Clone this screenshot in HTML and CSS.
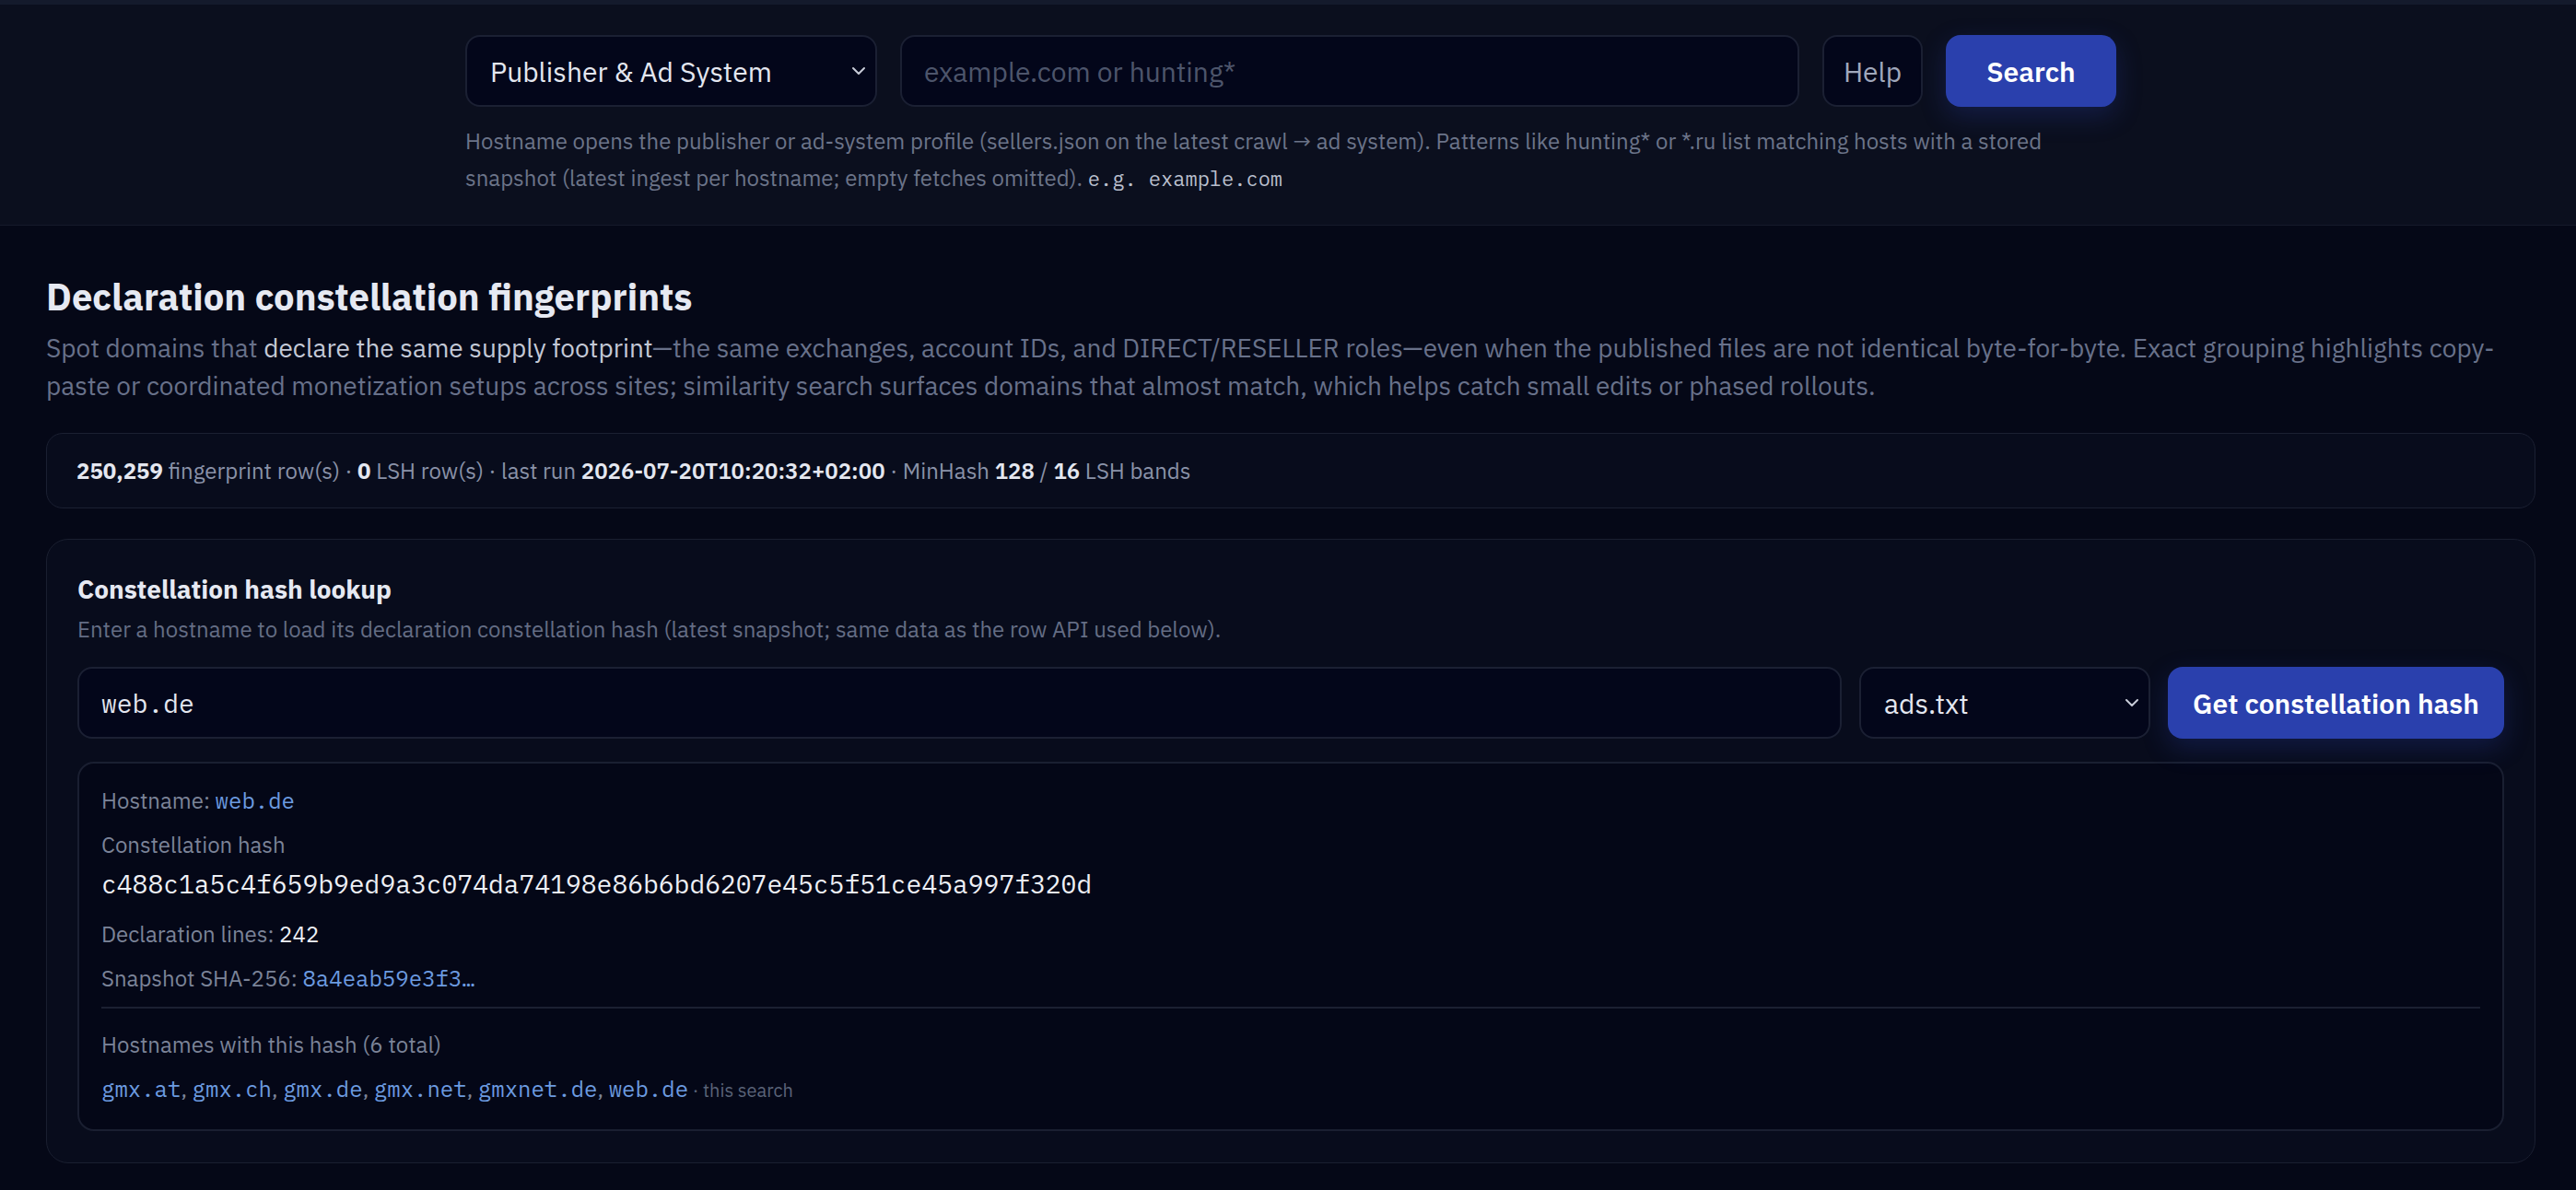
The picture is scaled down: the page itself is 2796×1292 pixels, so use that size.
FILE: index.html
```html
<!DOCTYPE html>
<html lang="en">
<head>
<meta charset="UTF-8">
    <title>Declaration constellation fingerprints</title>
    <link rel="stylesheet" href="styles.css">
</head>
<body>
    <header class="topbar">
        <div class="topbar-inner">
            <form class="search-row">
                <div class="select-wrap mode-select">
                    <select class="field">
                        <option>Publisher &amp; Ad System</option>
                    </select>
                    <svg class="caret" width="16" height="10" viewBox="0 0 16 10"><path d="M2 2l6 6 6-6" fill="none" stroke="currentColor" stroke-width="2" stroke-linecap="round" stroke-linejoin="round"/></svg>
                </div>
                <input class="field query" type="text" placeholder="example.com or hunting*">
                <button type="button" class="btn-ghost">Help</button>
                <button type="button" class="btn-primary">Search</button>
            </form>
            <p class="hint">Hostname opens the publisher or ad-system profile (sellers.json on the latest crawl → ad system). Patterns like hunting* or *.ru list matching hosts with a stored snapshot (latest ingest per hostname; empty fetches omitted). <code>e.g. example.com</code></p>
        </div>
    </header>

    <main class="page">
        <h1 class="page-title">Declaration constellation fingerprints</h1>
        <p class="lead">Spot domains that <strong>declare the same supply footprint</strong>—the same exchanges, account IDs, and DIRECT/RESELLER roles—even when the published files are not identical byte-for-byte. Exact grouping highlights copy-paste or coordinated monetization setups across sites; similarity search surfaces domains that almost match, which helps catch small edits or phased rollouts.</p>

        <div class="stats">
            <b>250,259</b> fingerprint row(s) · <b>0</b> LSH row(s) · last run <b>2026-07-20T10:20:32+02:00</b> · MinHash <b>128</b> / <b>16</b> LSH bands
        </div>

        <section class="card">
            <h2 class="card-title">Constellation hash lookup</h2>
            <p class="card-sub">Enter a hostname to load its declaration constellation hash (latest snapshot; same data as the row API used below).</p>

            <div class="lookup-row">
                <input class="field host" type="text" value="web.de">
                <div class="select-wrap file-select">
                    <select class="field">
                        <option>ads.txt</option>
                    </select>
                    <svg class="caret" width="16" height="10" viewBox="0 0 16 10"><path d="M2 2l6 6 6-6" fill="none" stroke="currentColor" stroke-width="2" stroke-linecap="round" stroke-linejoin="round"/></svg>
                </div>
                <button type="button" class="btn-primary btn-wide">Get constellation hash</button>
            </div>

            <div class="result">
                <div class="r-line"><span class="lbl">Hostname:</span> <a class="mono-link">web.de</a></div>
                <div class="r-line r-label">Constellation hash</div>
                <div class="r-hash">c488c1a5c4f659b9ed9a3c074da74198e86b6bd6207e45c5f51ce45a997f320d</div>
                <div class="r-line r-gap"><span class="lbl">Declaration lines:</span> <span class="val">242</span></div>
                <div class="r-line"><span class="lbl">Snapshot SHA-256:</span> <a class="mono-link">8a4eab59e3f3…</a></div>
                <div class="divider"></div>
                <div class="r-line r-label r-gap2">Hostnames with this hash (6 total)</div>
                <div class="r-line hosts">
                    <a class="mono-link">gmx.at</a><span class="sep">, </span><a class="mono-link">gmx.ch</a><span class="sep">, </span><a class="mono-link">gmx.de</a><span class="sep">, </span><a class="mono-link">gmx.net</a><span class="sep">, </span><a class="mono-link">gmxnet.de</a><span class="sep">, </span><a class="mono-link">web.de</a><span class="note"> · this search</span>
                </div>
            </div>
        </section>
    </main>
</body>
</html>
```

FILE: styles.css
```css
@charset "utf-8";
/* reset */
body, div, h1, h2, p, form, input, select, button { margin: 0; padding: 0; }

html, body {
    background: #050817;
}

body {
    font-family: "IBM Plex Sans", Roboto, "Noto Sans", sans-serif;
    color: #e4e7f0;
    min-height: 1292px;
}

/* top search bar */
.topbar {
    background: #0b0f1e;
    border-top: 5px solid #141a2c;
    border-bottom: 1px solid #151a2a;
    padding: 33px 0 30px 6px;
}

.topbar-inner {
    width: 1792px;
    margin: 0 auto;
}

.search-row {
    display: flex;
    gap: 25px;
    height: 78px;
}

.field {
    background: #03061a;
    border: 2px solid #1b2033;
    border-radius: 16px;
    color: #e4e7f0;
    font-family: inherit;
    font-size: 30px;
    outline: none;
    height: 78px;
    box-sizing: border-box;
}

.select-wrap {
    position: relative;
}

.select-wrap select {
    -webkit-appearance: none;
    appearance: none;
    width: 100%;
    padding: 0 50px 0 25px;
}

.select-wrap .caret {
    position: absolute;
    right: 12px;
    top: 34px;
    color: #c8ccd8;
    pointer-events: none;
}

.mode-select { width: 447px; }

.query {
    flex: 1;
    padding: 0 24px;
}

.query::placeholder { color: #4d556b; }

.btn-ghost {
    width: 109px;
    background: #03061a;
    border: 2px solid #1b2033;
    border-radius: 16px;
    color: #a0a8bc;
    font-family: inherit;
    font-size: 30px;
}

.btn-primary {
    background: #2a40ad;
    border: 0;
    border-radius: 16px;
    color: #fff;
    font-family: inherit;
    font-size: 30px;
    font-weight: 600;
    width: 185px;
    height: 78px;
    box-shadow: 0 10px 28px rgba(42, 64, 173, 0.28);
}

.hint {
    margin-top: 17px;
    font-size: 24px;
    line-height: 40px;
    color: #6b7489;
    width: 1760px;
}

/* monospace bits */
code, .mono-link, .r-hash, .field.host {
    font-family: "IBM Plex Mono", "DejaVu Sans Mono", monospace;
}

.hint code {
    font-size: 22px;
    color: #b9bfcd;
}

/* main */
.page {
    padding: 53px 44px 40px 50px;
}

.page-title {
    font-size: 40px;
    line-height: 48px;
    font-weight: 700;
    color: #e6e9f2;
}

.lead {
    margin-top: 11px;
    font-size: 28px;
    line-height: 41px;
    color: #68718a;
}

.lead strong {
    font-weight: 400;
    color: #c3c8d6;
}

.stats {
    margin-top: 31px;
    background: #080c1c;
    border: 1px solid #1b2032;
    border-radius: 18px;
    padding: 22px 32px;
    font-size: 24px;
    line-height: 36px;
    color: #8a92a8;
}

.stats b {
    color: #e4e7f0;
    font-weight: 600;
}

.stats b:first-child,
.stats b:nth-child(2) { font-weight: 700; }

.card {
    margin-top: 33px;
    background: #080c1c;
    border: 1px solid #1a1f30;
    border-radius: 24px;
    padding: 36px 33px 34px;
}

.card-title {
    font-size: 28px;
    line-height: 36px;
    font-weight: 700;
    color: #e6e9f2;
}

.card-sub {
    margin-top: 7px;
    font-size: 24px;
    line-height: 36px;
    color: #646d84;
}

.lookup-row {
    display: flex;
    gap: 19px;
    margin-top: 23px;
}

.field.host {
    flex: 1;
    font-size: 28px;
    padding: 0 24px;
}

.file-select { width: 316px; }

.btn-wide { width: 365px; }

.result {
    margin-top: 25px;
    background: #040717;
    border: 2px solid #1a1f31;
    border-radius: 18px;
    padding: 22px 24px 24px;
}

.r-line {
    font-size: 24px;
    line-height: 36px;
    color: #7b8398;
}

.r-label { margin-top: 12px; }

.r-hash {
    margin-top: 5px;
    font-size: 28px;
    line-height: 40px;
    color: #eef0f6;
}

.r-gap { margin-top: 16px; }
.r-line + .r-line { margin-top: 12px; }
.r-hash + .r-line { margin-top: 16px; }

.lbl { color: #7b8398; }
.val { color: #eef0f6; }

.mono-link {
    color: #6c9be0;
    font-size: 24px;
    text-decoration: none;
}

.divider {
    margin-top: 13px;
    border-top: 2px solid #1b2032;
}

.divider + .r-line { margin-top: 21px; }

.hosts .sep { color: #7b8398; }

.hosts .note {
    font-size: 20px;
    color: #5a6378;
}
```
